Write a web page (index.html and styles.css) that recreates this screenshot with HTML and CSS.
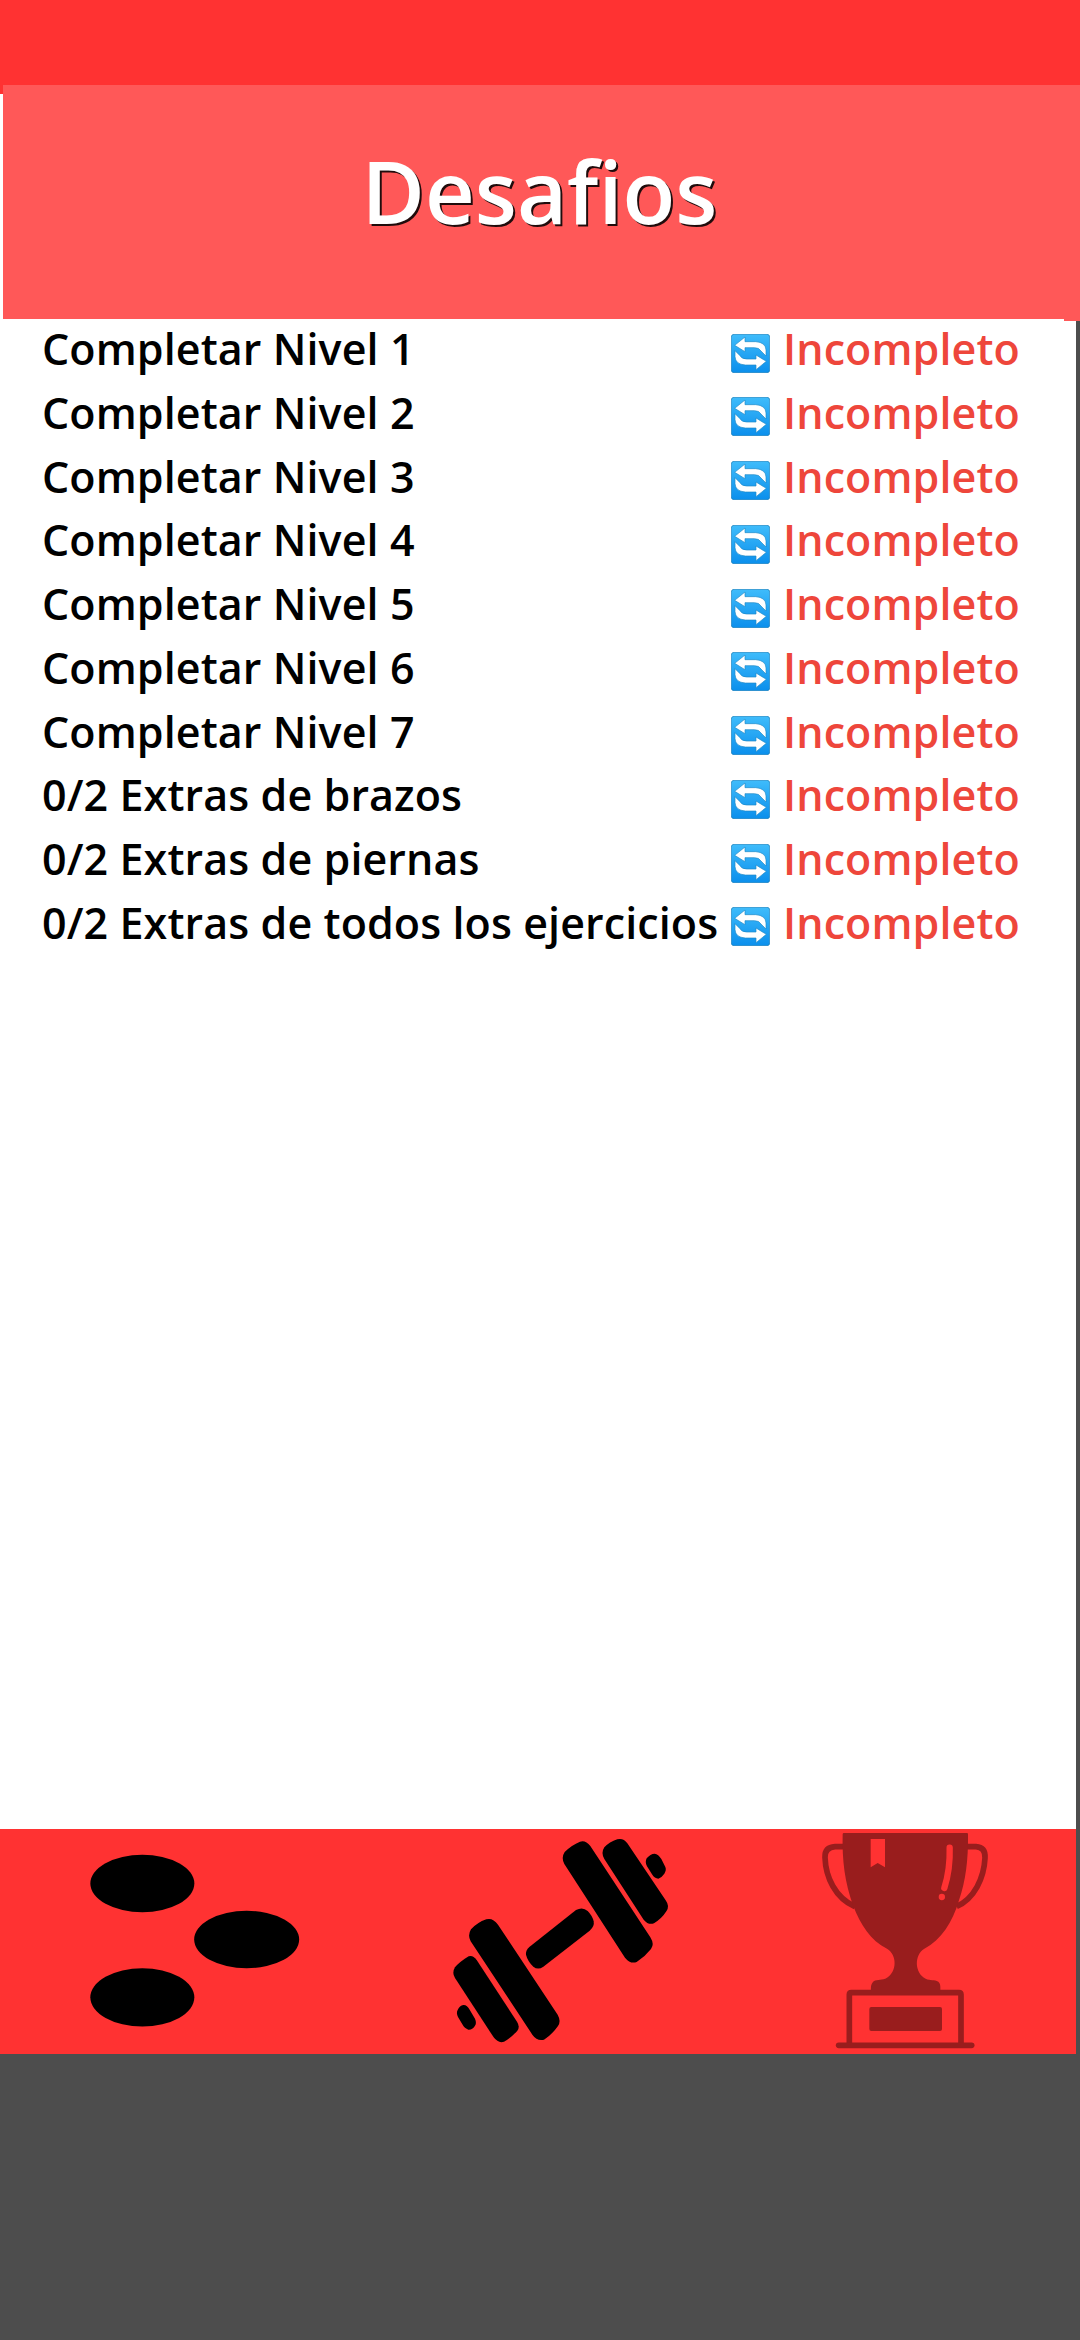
FILE: index.html
```html
<!DOCTYPE html>
<html lang="es">
<head>
<meta charset="utf-8">
<title>Desafios</title>
<link rel="stylesheet" href="styles.css">
</head>
<body>
<svg class="defs" width="0" height="0" aria-hidden="true">
  <defs>
    <linearGradient id="tile" x1="0" y1="0" x2="0" y2="1">
      <stop offset="0" stop-color="#3fbcfb"/><stop offset="1" stop-color="#0b8fec"/>
    </linearGradient>
    <symbol id="sync" viewBox="0 0 117 117">
      <rect x="1" y="1" width="115" height="115" rx="8" fill="url(#tile)" stroke="#1c7fb8" stroke-width="2"/>
      <path d="M11 34 42 9V23H74Q104 25 105 48V66L90 51Q85 41 70 41H42V53Z" fill="#fff" stroke="#2089c6" stroke-width="2"/>
      <path d="M106 82 75 107V93H43Q13 91 12 68V50L27 65Q32 75 47 75H75V63Z" fill="#fff" stroke="#2089c6" stroke-width="2"/>
    </symbol>
  </defs>
</svg>
<div class="screen">
  <div class="topbar"></div>
  <header class="header"><h1 class="title">Desafios</h1></header>
  <main class="content">
    <ul class="list">
      <li class="row"><span class="name">Completar Nivel 1</span><svg class="sync"><use href="#sync"/></svg><span class="state">Incompleto</span></li>
      <li class="row"><span class="name">Completar Nivel 2</span><svg class="sync"><use href="#sync"/></svg><span class="state">Incompleto</span></li>
      <li class="row"><span class="name">Completar Nivel 3</span><svg class="sync"><use href="#sync"/></svg><span class="state">Incompleto</span></li>
      <li class="row"><span class="name">Completar Nivel 4</span><svg class="sync"><use href="#sync"/></svg><span class="state">Incompleto</span></li>
      <li class="row"><span class="name">Completar Nivel 5</span><svg class="sync"><use href="#sync"/></svg><span class="state">Incompleto</span></li>
      <li class="row"><span class="name">Completar Nivel 6</span><svg class="sync"><use href="#sync"/></svg><span class="state">Incompleto</span></li>
      <li class="row"><span class="name">Completar Nivel 7</span><svg class="sync"><use href="#sync"/></svg><span class="state">Incompleto</span></li>
      <li class="row"><span class="name">0/2 Extras de brazos</span><svg class="sync"><use href="#sync"/></svg><span class="state">Incompleto</span></li>
      <li class="row"><span class="name">0/2 Extras de piernas</span><svg class="sync"><use href="#sync"/></svg><span class="state">Incompleto</span></li>
      <li class="row"><span class="name">0/2 Extras de todos los ejercicios</span><svg class="sync"><use href="#sync"/></svg><span class="state">Incompleto</span></li>
    </ul>
  </main>
  <nav class="nav">
    <svg class="levels" viewBox="0 57 900 675">
      <ellipse cx="307" cy="220.500" rx="156" ry="86"/>
      <ellipse cx="620" cy="388.500" rx="157.500" ry="86"/>
      <ellipse cx="307" cy="562" rx="156" ry="87.500"/>
    </svg>
    <svg class="dumbbell" viewBox="0 57 780 675">
      <path d="M404 126Q425 105 450 95 467 90 481 108L661 382Q674 403 663 417 645 440 620 456 601 463 585 443L403 162Q393 143 404 126Z"/>
      <path d="M523 112Q538 96 562 88 580 83 592 100L707 271Q720 289 709 304 696 325 672 340 655 346 641 329L523 147Q512 129 523 112Z"/>
      <path d="M650 145Q661 131 674 131 685 132 694 147L706 171Q710 180 703 191 694 204 685 206 674 206 666 193L651 169Q644 157 650 145Z"/>
      <path d="M438 300Q458 289 473 303 487 317 491 334 494 350 479 362L340 470Q324 481 310 470 293 454 288 434 286 422 298 411Z"/>
      <path d="M123 358Q141 338 169 328 188 322 204 344L383 614Q394 634 384 648 366 674 342 689 322 695 307 674L122 394Q112 376 123 358Z"/>
      <path d="M75 472Q88 456 116 439 128 434 140 450L261 635Q271 651 262 662 243 684 222 695 205 701 191 682L75 504Q65 488 75 472Z"/>
      <path d="M83 600Q89 587 100 585 111 584 119 599L135 626Q141 640 134 649 127 660 115 659 104 656 97 643L84 621Q78 609 83 600Z"/>
    </svg>
    <svg class="trophy" viewBox="0 57 888 675">
      <g fill="none" stroke="#991d1d" stroke-width="17">
        <path d="M195 110H165Q134 112 135 142C137 201 165 263 225 290M558 110H588Q617 112 615 144C612 204 583 266 530 289"/>
        <path d="M208 706V554Q208 548 214 548H537Q543 548 543 554V706"/>
        <path d="M176 706H575" stroke-linecap="round"/>
      </g>
      <path fill="#991d1d" d="M192 69H561Q564 69 564 73C565 151 557 213 537 271 517 338 484 390 433 416 402 434 403 489 437 506 451 513 463 507 475 515 483 522 481 535 481 546H273C273 535 271 523 281 514 293 506 307 512 321 503 351 485 352 434 321 416 271 393 242 343 220 289 194 217 186 150 188 73Q188 69 192 69Z"/>
      <rect x="268" y="591" width="218" height="72" rx="6" fill="#991d1d"/>
      <path fill="#ff3232" d="M272 87H315V172L293 159 272 172Z"/>
      <path fill="none" stroke="#ff3232" stroke-width="19" stroke-linecap="round" d="M509 113Q511 178 493 234"/>
      <circle cx="485.500" cy="261" r="9.500" fill="#ff3232"/>
    </svg>
  </nav>
</div>
</body>
</html>
```
FILE: styles.css
```css
body {
  margin: 0;
  background: #4d4d4d;
  font-family: "Open Sans", "Noto Sans", sans-serif;
  font-weight: 600;
}

.defs {
  display: block;
}

.screen {
  display: flex;
  flex-direction: column;
  height: 2340px;
  overflow: hidden;
}

.topbar {
  flex: none;
  height: 85px;
  background: #ff3232;
}

/* the left edge shows the end of the top bar, then white */
.header {
  flex: none;
  display: flex;
  justify-content: center;
  box-sizing: border-box;
  height: 234px;
  padding: 0 4px 0 3px;
  background:
    linear-gradient(#ff3232 9px, #fff 9px) left / 3px 100% no-repeat,
    #ff5858;
}

.title {
  margin: 46px 0 0;
  color: #fff;
  font-size: 86.500px;
  font-weight: 600;
  line-height: 120px;
  font-variant-ligatures: none;
  text-shadow: 2px 2px 0 #200c0c;
}

/* the header reaches 2px lower at the right corner */
.content {
  flex: none;
  height: 1510px;
  background:
    linear-gradient(#ff5858, #ff5858) right top / 16px 2px no-repeat,
    linear-gradient(#fff, #fff) left top / 1076px 100% no-repeat;
}

.list {
  display: flex;
  flex-direction: column;
  gap: 5.780px;
  margin: 0;
  padding: 1px 0 0 42px;
  list-style: none;
}

.row {
  display: grid;
  grid-template-columns: 689px 39px auto;
  align-items: center;
  height: 58px;
  font-size: 43px;
  letter-spacing: 0.100px;
  line-height: 58px;
  white-space: nowrap;
}

.name {
  color: #000;
}

.sync {
  width: 39px;
  height: 39px;
  margin-top: 8px;
}

.state {
  padding-left: 13px;
  color: #ee463b;
}

.nav {
  flex: none;
  display: flex;
  gap: 90px;
  box-sizing: border-box;
  width: 1076px;
  height: 225px;
  padding-left: 40px;
  background: #ff3232;
}

.levels,
.dumbbell,
.trophy {
  flex: none;
  height: 225px;
}

.levels {
  width: 300px;
}

.dumbbell {
  width: 260px;
}

.trophy {
  width: 296px;
}
```
